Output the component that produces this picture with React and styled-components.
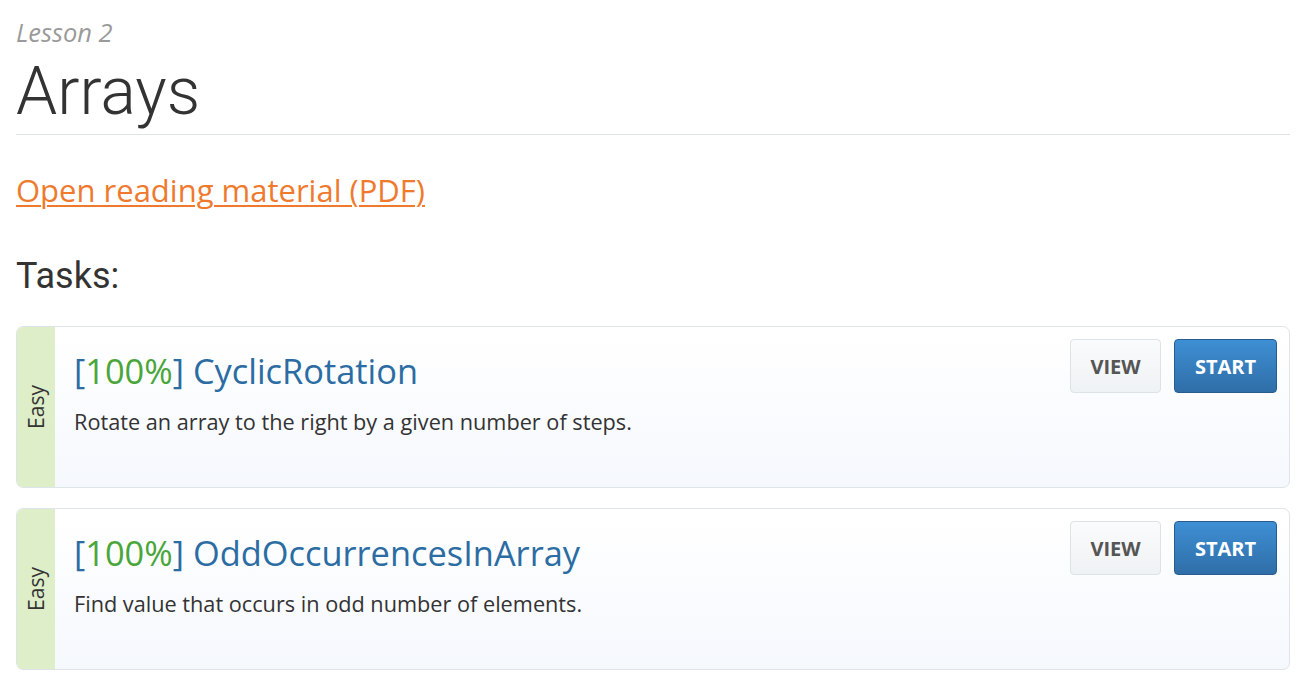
import React from "react";
import styled, { createGlobalStyle } from "styled-components";

const Global = createGlobalStyle`
  html, body { margin: 0; padding: 0; background: #fff; }
  body { font-family: "Open Sans", "Liberation Sans", sans-serif; color: #333; }
`;

const Page = styled.main`
  padding: 15px 14px 16px 16px;
`;

const Kicker = styled.div`
  font-family: "Open Sans", sans-serif;
  font-style: italic;
  font-size: 25.5px;
  line-height: 34px;
  color: #9a9a9a;
`;

const Title = styled.h1`
  margin: 0;
  font-family: Roboto, sans-serif;
  font-weight: 300;
  font-size: 66px;
  line-height: 85px;
  color: #333;
  border-bottom: 1px solid #dde3e8;
`;

const Reading = styled.a`
  display: inline-block;
  margin-top: 34px;
  font-family: "Open Sans", sans-serif;
  font-size: 31px;
  line-height: 42px;
  color: #ef7a2e;
  text-decoration: underline;
  text-underline-offset: 3px;
  text-decoration-thickness: 2px;
`;

const Section = styled.h2`
  margin: 44px 0 29px;
  font-family: Roboto, sans-serif;
  font-weight: 400;
  font-size: 36px;
  line-height: 42px;
  color: #333;
`;

const List = styled.div`
  display: flex;
  flex-direction: column;
  gap: 20px;
`;

const Card = styled.div`
  display: flex;
  min-height: 160px;
  border: 1px solid #dde4ea;
  border-radius: 7px;
  overflow: hidden;
  background: linear-gradient(#ffffff, #f5f8fd);
`;

const Level = styled.div`
  width: 38px;
  flex: none;
  background: #ddeec8;
  display: flex;
  align-items: center;
  justify-content: center;
`;

const LevelText = styled.span`
  transform: rotate(-90deg);
  font-size: 21px;
  color: #333;
  white-space: nowrap;
`;

const Body = styled.div`
  flex: 1;
  padding: 21px 20px 0 19px;
`;

const TaskName = styled.a`
  display: block;
  font-size: 34.4px;
  line-height: 46px;
  color: #2b6ca3;
  text-decoration: none;
`;

const Score = styled.span`
  color: #4aa63a;
`;

const Desc = styled.p`
  margin: 14px 0 0;
  font-size: 21.7px;
  line-height: 28px;
  color: #333;
`;

const Actions = styled.div`
  display: flex;
  gap: 13px;
  padding: 12px 12px 0 0;
  align-items: flex-start;
`;

const Button = styled.button`
  height: 54px;
  width: ${(p) => (p.$primary ? "103px" : "91px")};
  padding: 0;
  border-radius: 4px;
  font-family: "Open Sans", sans-serif;
  font-weight: 700;
  font-size: 20px;
  text-transform: uppercase;
  cursor: pointer;
  border: 1px solid ${(p) => (p.$primary ? "#275d8e" : "#dde2e6")};
  color: ${(p) => (p.$primary ? "#fff" : "#555")};
  background: ${(p) =>
    p.$primary
      ? "linear-gradient(#3e8fd4, #2f6ea8)"
      : "linear-gradient(#fafbfc, #eff2f4)"};
`;

const tasks = [
  { name: "CyclicRotation", desc: "Rotate an array to the right by a given number of steps." },
  { name: "OddOccurrencesInArray", desc: "Find value that occurs in odd number of elements." },
];

export default function App() {
  return (
    <>
      <Global />
      <Page>
        <Kicker>Lesson 2</Kicker>
        <Title>Arrays</Title>
        <Reading href="#">Open reading material (PDF)</Reading>
        <Section>Tasks:</Section>
        <List>
          {tasks.map((t) => (
            <Card key={t.name}>
              <Level>
                <LevelText>Easy</LevelText>
              </Level>
              <Body>
                <TaskName href="#">
                  [<Score>100%</Score>] {t.name}
                </TaskName>
                <Desc>{t.desc}</Desc>
              </Body>
              <Actions>
                <Button>View</Button>
                <Button $primary>Start</Button>
              </Actions>
            </Card>
          ))}
        </List>
      </Page>
    </>
  );
}
